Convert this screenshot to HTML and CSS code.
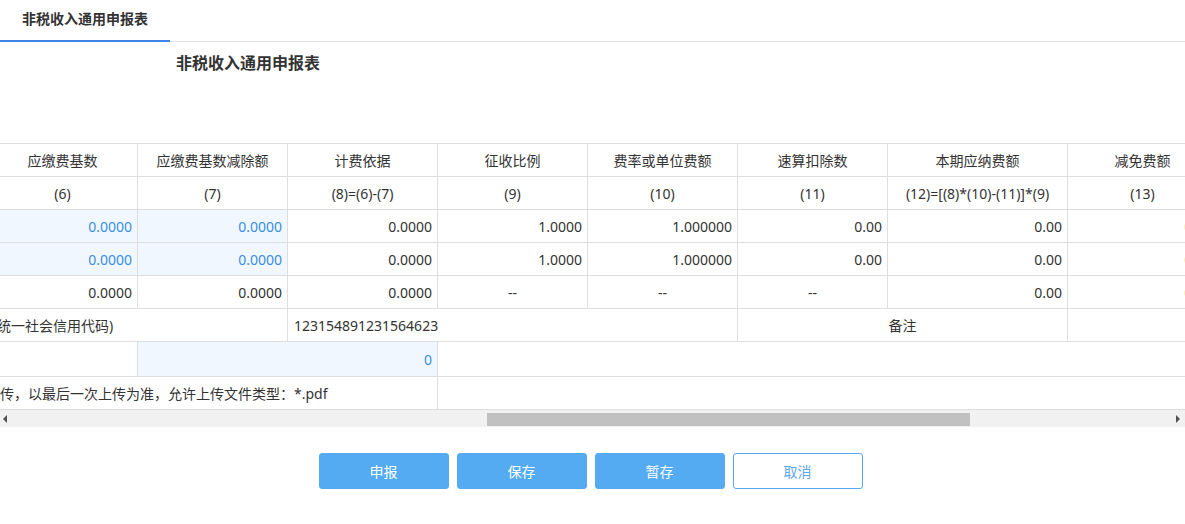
FILE: index.html
```html
<!DOCTYPE html>
<html lang="zh-CN">
<head>
<meta charset="utf-8">
<title>非税收入通用申报表</title>
<link rel="stylesheet" href="styles.css">
</head>
<body>
<div class="tabs">
  <div class="tab active">非税收入通用申报表</div>
</div>
<h1 class="title">非税收入通用申报表</h1>
<div class="grid-wrap">
  <table class="grid">
    <colgroup>
      <col class="c150"><col class="c150"><col class="c150"><col class="c150"><col class="c150"><col class="c150"><col class="c180"><col class="c150">
    </colgroup>
    <tr class="head">
      <td>应缴费基数</td><td>应缴费基数减除额</td><td>计费依据</td><td>征收比例</td><td>费率或单位费额</td><td>速算扣除数</td><td>本期应纳费额</td><td>减免费额</td>
    </tr>
    <tr class="head">
      <td>(6)</td><td>(7)</td><td>(8)=(6)-(7)</td><td>(9)</td><td>(10)</td><td>(11)</td><td>(12)=[(8)*(10)-(11)]*(9)</td><td>(13)</td>
    </tr>
    <tr>
      <td class="num edit">0.0000</td><td class="num edit">0.0000</td><td class="num">0.0000</td><td class="num">1.0000</td><td class="num">1.000000</td><td class="num">0.00</td><td class="num">0.00</td><td class="num warn">0.00</td>
    </tr>
    <tr>
      <td class="num edit">0.0000</td><td class="num edit">0.0000</td><td class="num">0.0000</td><td class="num">1.0000</td><td class="num">1.000000</td><td class="num">0.00</td><td class="num">0.00</td><td class="num warn">0.00</td>
    </tr>
    <tr>
      <td class="num">0.0000</td><td class="num">0.0000</td><td class="num">0.0000</td><td class="mid">--</td><td class="mid">--</td><td class="mid">--</td><td class="num">0.00</td><td class="num warn">0.00</td>
    </tr>
    <tr>
      <td colspan="2" class="label">统一社会信用代码)</td><td colspan="3" class="text">123154891231564623</td><td colspan="2" class="mid">备注</td><td></td>
    </tr>
    <tr class="tall">
      <td></td><td colspan="2" class="num edit">0</td><td colspan="5" class="open"></td>
    </tr>
    <tr class="short">
      <td colspan="3" class="note">传，以最后一次上传为准，允许上传文件类型：*.pdf</td><td colspan="5" class="open"></td>
    </tr>
  </table>
</div>
<div class="hscroll">
  <span class="arrow left"></span>
  <div class="track"><div class="thumb"></div></div>
  <span class="arrow right"></span>
</div>
<div class="actions">
  <button class="btn primary">申报</button>
  <button class="btn primary">保存</button>
  <button class="btn primary">暂存</button>
  <button class="btn ghost">取消</button>
</div>
</body>
</html>
```
FILE: styles.css
```css
html, body {
  margin: 0;
  padding: 0;
  background: #fff;
}
body {
  font-family: "Noto Sans", "Noto Sans CJK SC", sans-serif;
  color: #333;
  font-size: 14px;
  width: 1185px;
  overflow: hidden;
}
.tabs {
  height: 41px;
  border-bottom: 1px solid #e2e2e2;
  display: flex;
}
.tab {
  width: 148px;
  padding-left: 22px;
  height: 40px;
  line-height: 38px;
  font-weight: bold;
  font-size: 14px;
  color: #333;
}
.tab.active {
  border-bottom: 2px solid #3d83e8;
}
.title {
  margin: 10px 0 0 176px;
  font-size: 16px;
  line-height: 22px;
  font-weight: bold;
  color: #333;
}
.grid-wrap {
  margin-top: 69px;
  width: 1185px;
  overflow: hidden;
}
.grid {
  margin-left: -13px;
  border-collapse: collapse;
  table-layout: fixed;
  width: 1230px;
}
.c150 { width: 150px; }
.c180 { width: 180px; }
.grid td {
  border: 1px solid #dedede;
  height: 33px;
  padding: 0 5px;
  box-sizing: border-box;
  white-space: nowrap;
  overflow: hidden;
  font-size: 14px;
  color: #333;
  text-align: center;
}
.grid tr.tall td { height: 35px; }
.grid tr.short td { height: 33px; border-bottom: 1px solid #dedede; }
.grid td.num { text-align: right; }
.grid td.mid { text-align: center; }
.grid td.text { text-align: left; padding-left: 6px; }
.grid td.label { text-align: left; padding-left: 9px; }
.grid td.note { text-align: left; padding-left: 12px; }
.grid td.edit {
  background: #f0f7ff;
  color: #3a8ee6;
}
.grid td.warn { color: #f5b342; }
.grid td.open {
  border-left: 1px solid #dedede;
  border-right: none;
}
.grid tr.tall td.open { border-bottom: 1px solid #dedede; }
.hscroll {
  height: 17px;
  background: #f1f1f1;
  display: flex;
  align-items: center;
}
.arrow {
  width: 0;
  height: 0;
  border-top: 4px solid transparent;
  border-bottom: 4px solid transparent;
}
.arrow.left {
  margin-left: 3px;
  border-right: 4px solid #505050;
}
.arrow.right {
  margin-right: 5px;
  border-left: 4px solid #505050;
}
.track {
  flex: 1;
  height: 13px;
  margin: 2px 0 0 0;
}
.thumb {
  margin-left: 480px;
  width: 483px;
  height: 13px;
  background: #c1c1c1;
}
.actions {
  margin-top: 26px;
  padding-right: 4px;
  display: flex;
  justify-content: center;
  gap: 8px;
}
.btn {
  width: 130px;
  height: 36px;
  border-radius: 3px;
  font-family: "Noto Sans CJK SC", "Noto Sans", sans-serif;
  font-size: 14px;
  cursor: pointer;
  padding: 0;
}
.btn.primary {
  background: #55abf2;
  border: 1px solid #55abf2;
  color: #fff;
}
.btn.ghost {
  background: #fff;
  border: 1px solid #55abf2;
  color: #5ea6ee;
}
```
